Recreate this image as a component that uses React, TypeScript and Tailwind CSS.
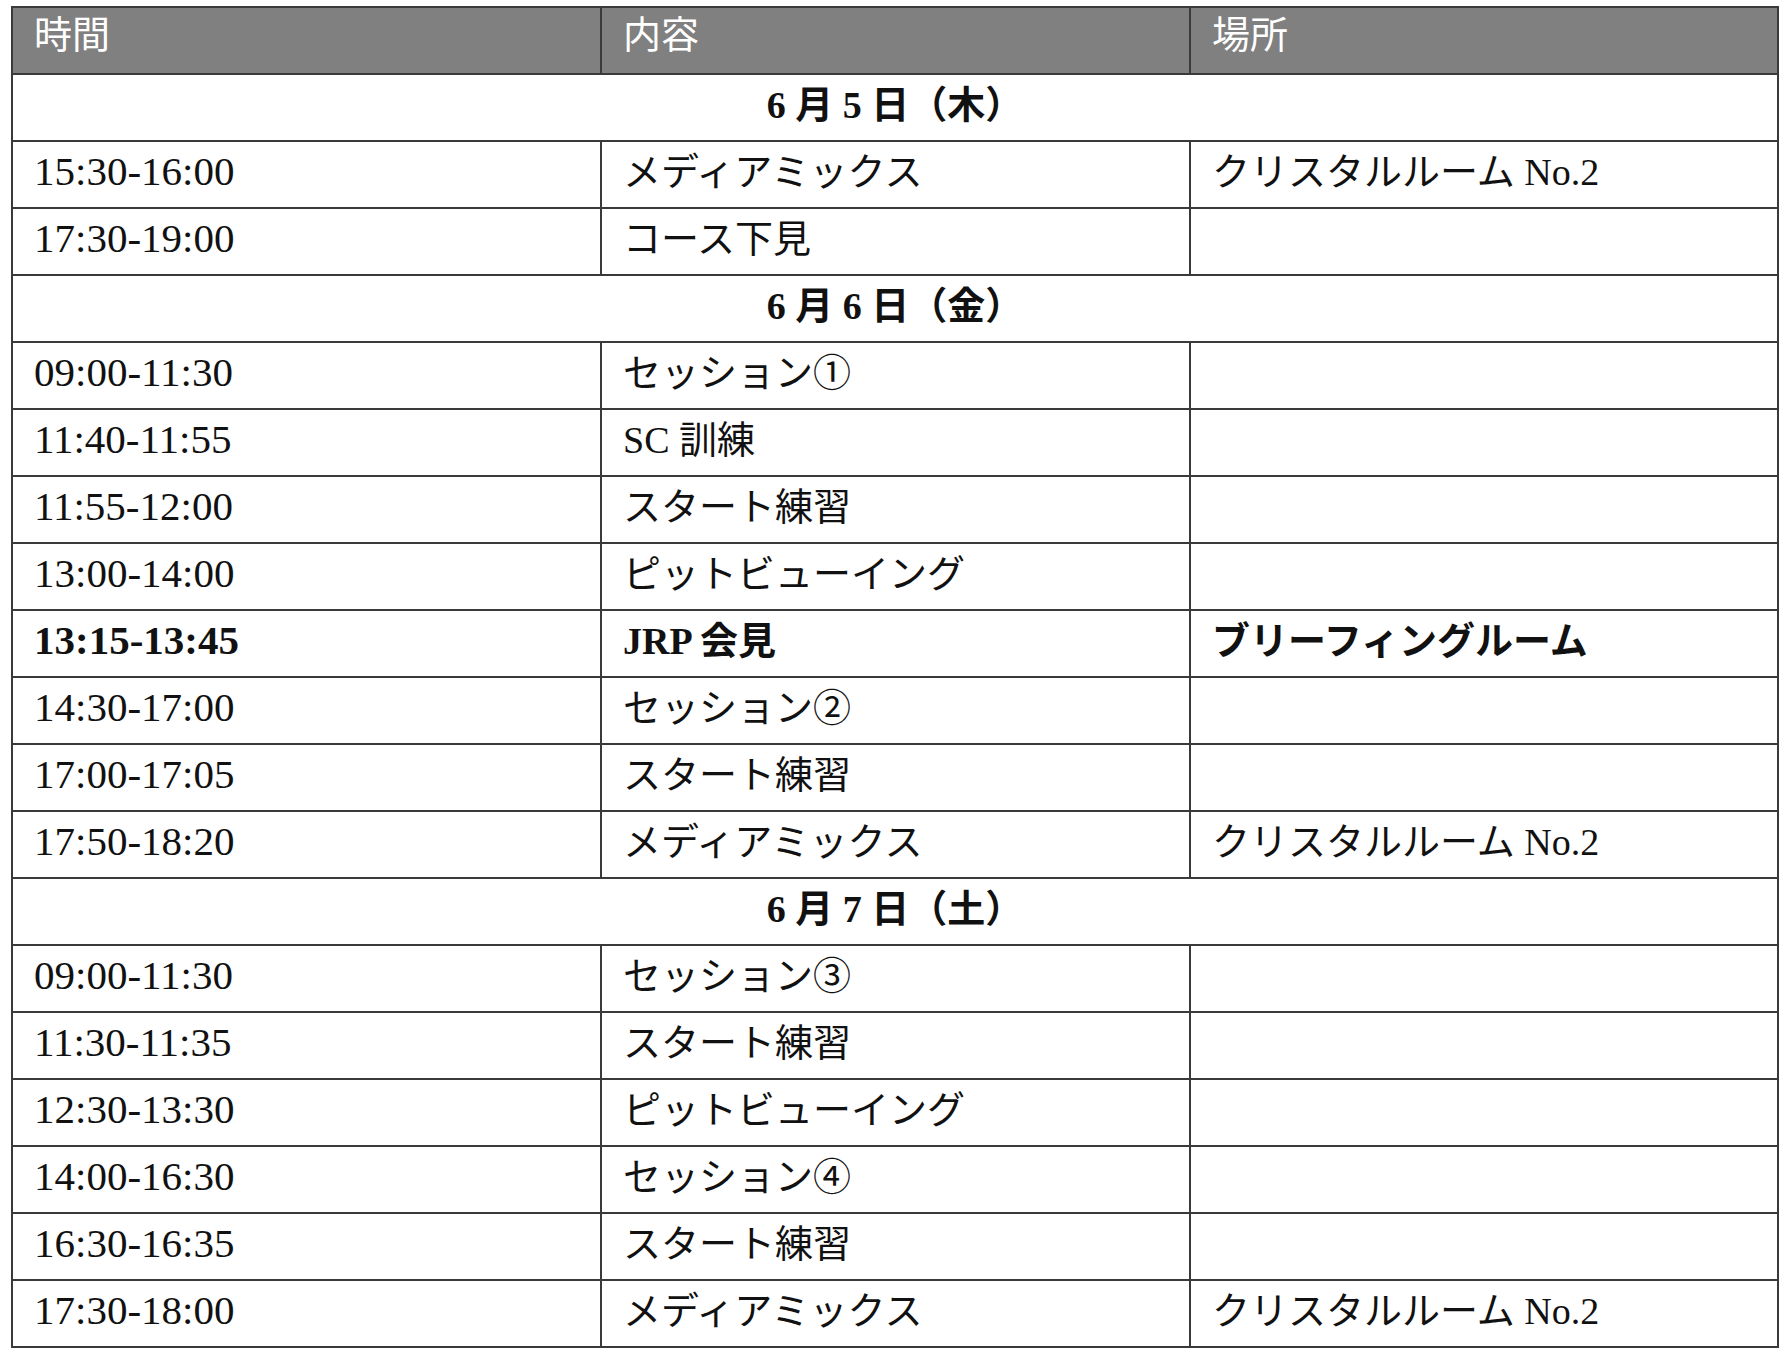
type Row =
  | { kind: "date"; label: string }
  | { kind: "item"; time: string; what: string; where?: string; bold?: boolean };

const rows: Row[] = [
  { kind: "date", label: "6 月 5 日（木）" },
  { kind: "item", time: "15:30-16:00", what: "メディアミックス", where: "クリスタルルーム No.2" },
  { kind: "item", time: "17:30-19:00", what: "コース下見" },
  { kind: "date", label: "6 月 6 日（金）" },
  { kind: "item", time: "09:00-11:30", what: "セッション①" },
  { kind: "item", time: "11:40-11:55", what: "SC 訓練" },
  { kind: "item", time: "11:55-12:00", what: "スタート練習" },
  { kind: "item", time: "13:00-14:00", what: "ピットビューイング" },
  { kind: "item", time: "13:15-13:45", what: "JRP 会見", where: "ブリーフィングルーム", bold: true },
  { kind: "item", time: "14:30-17:00", what: "セッション②" },
  { kind: "item", time: "17:00-17:05", what: "スタート練習" },
  { kind: "item", time: "17:50-18:20", what: "メディアミックス", where: "クリスタルルーム No.2" },
  { kind: "date", label: "6 月 7 日（土）" },
  { kind: "item", time: "09:00-11:30", what: "セッション③" },
  { kind: "item", time: "11:30-11:35", what: "スタート練習" },
  { kind: "item", time: "12:30-13:30", what: "ピットビューイング" },
  { kind: "item", time: "14:00-16:30", what: "セッション④" },
  { kind: "item", time: "16:30-16:35", what: "スタート練習" },
  { kind: "item", time: "17:30-18:00", what: "メディアミックス", where: "クリスタルルーム No.2" },
];

const cell = "h-[67px] border-2 border-[#3a3a3a] px-[21px] align-middle leading-none";

export default function App() {
  return (
    <div className="min-h-screen bg-white pl-[11px] pt-[6px] font-['Liberation_Serif','Noto_Sans_CJK_JP',serif] text-[38px] text-[#111]">
      <table className="w-[1766px] table-fixed border-collapse">
        <colgroup>
          <col className="w-[589px]" />
          <col className="w-[589px]" />
          <col className="w-[588px]" />
        </colgroup>
        <thead>
          <tr className="bg-[#808080] text-white">
            <th className={`${cell} pb-[12px] text-left font-normal`}>時間</th>
            <th className={`${cell} pb-[12px] text-left font-normal`}>内容</th>
            <th className={`${cell} pb-[12px] text-left font-normal`}>場所</th>
          </tr>
        </thead>
        <tbody>
          {rows.map((r, i) =>
            r.kind === "date" ? (
              <tr key={i}>
                <td colSpan={3} className={`${cell} pb-[6px] text-center text-[38px] font-bold`}>
                  {r.label}
                </td>
              </tr>
            ) : (
              <tr key={i} className={r.bold ? "font-bold" : ""}>
                <td className={`${cell} pb-[6px] text-[41px]`}>{r.time}</td>
                <td className={`${cell} pb-[6px]`}>{r.what}</td>
                <td className={`${cell} pb-[6px]`}>{r.where ?? ""}</td>
              </tr>
            ),
          )}
        </tbody>
      </table>
    </div>
  );
}
